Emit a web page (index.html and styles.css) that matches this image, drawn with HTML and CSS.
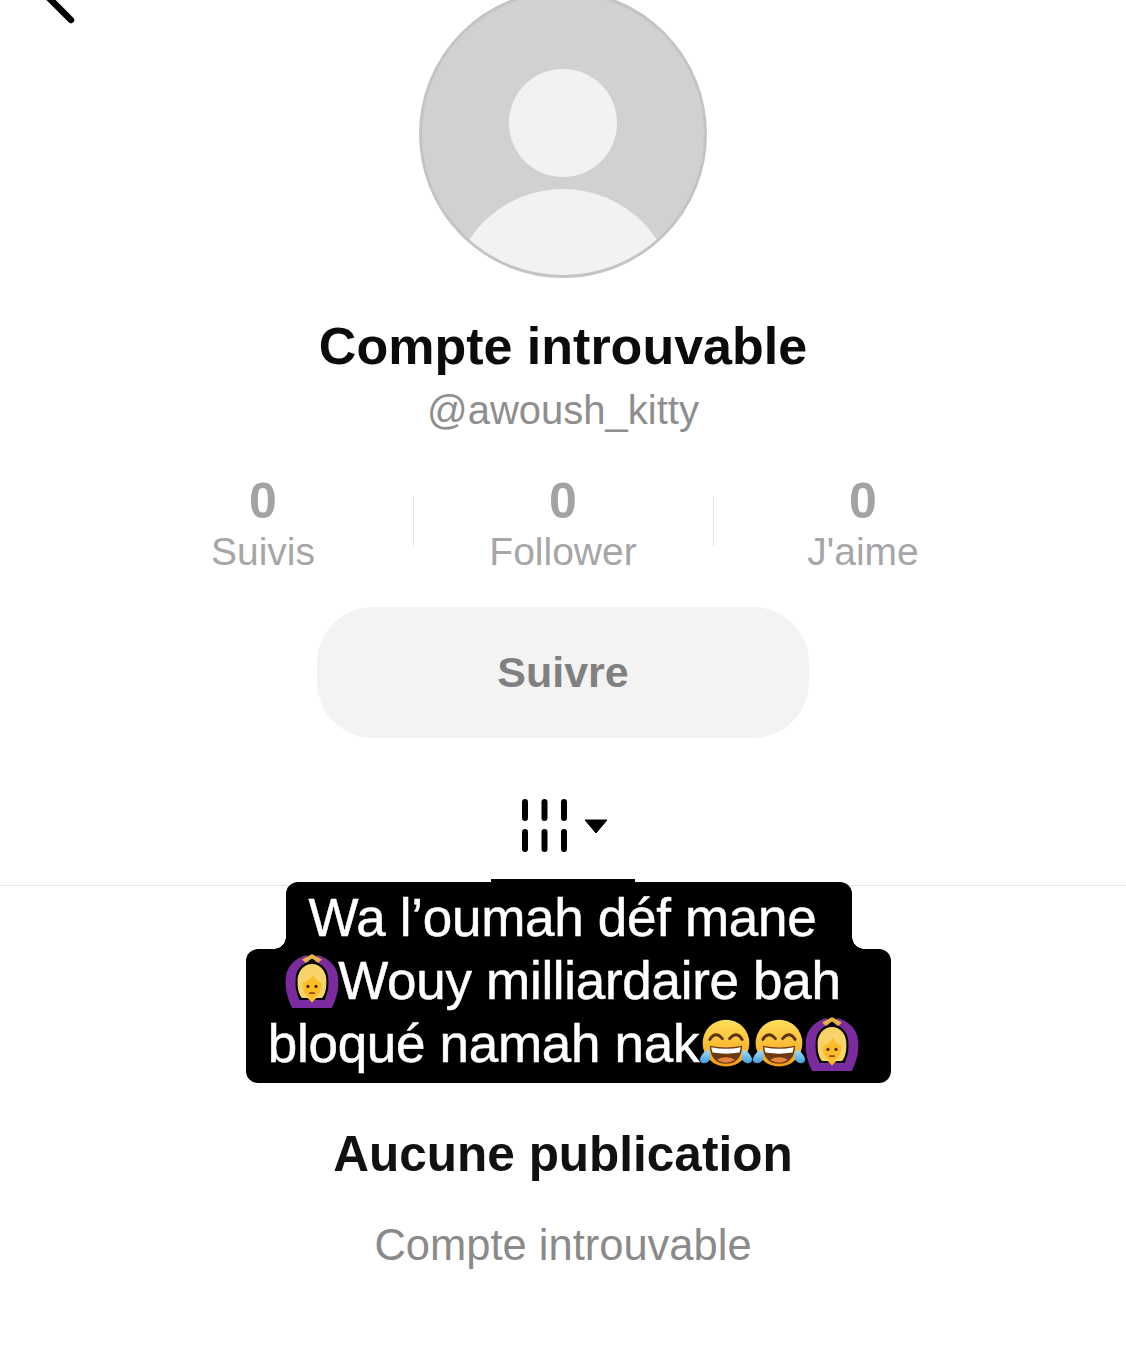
FILE: index.html
```html
<!DOCTYPE html>
<html lang="fr">
<head>
    <meta charset="UTF-8">
    <meta name="viewport" content="width=device-width, initial-scale=1.0">
    <title>Compte introuvable</title>
    <link rel="stylesheet" href="styles.css">
</head>
<body>
    <svg class="defs" width="0" height="0">
        <defs>
            <linearGradient id="joy-face" x1="0" y1="0" x2="0" y2="1">
                <stop offset="0" stop-color="#fee05a"/>
                <stop offset="1" stop-color="#f59e14"/>
            </linearGradient>
            <linearGradient id="joy-tear" x1="0" y1="0" x2="0" y2="1">
                <stop offset="0" stop-color="#a5e0f8"/>
                <stop offset="1" stop-color="#3f9fe0"/>
            </linearGradient>
            <symbol id="emoji-gesture" viewBox="0 0 60 60">
                <path d="M1 26C2 13 12 4 24 1L27 8C19 11 13 16 12 26 11 34 12 42 15 48L18 60H8C2 48 0 37 1 26Z" fill="#7a2c9e"/>
                <path d="M59 26C58 13 48 4 36 1L33 8C41 11 47 16 48 26 49 34 48 42 45 48L42 60H52C58 48 60 37 59 26Z" fill="#7a2c9e"/>
                <path d="M19 6L30 0 41 6 37 10 30 5 23 10Z" fill="#e9b043"/>
                <path d="M14 51H46V60H14Z" fill="#7a2c9e"/>
                <path d="M14 32C13 20 20 11 30 11 40 11 47 20 46 32 46 40 44 46 41 49H19C16 46 14 40 14 32Z" fill="#f7d36a"/>
                <path d="M20 32C24 31 29 27 31 23 34 28 37 31 40 32 41 41 36 49 30 49 24 49 19 41 20 32Z" fill="#fcbc28"/>
                <circle cx="25.500" cy="36" r="1.800" fill="#4a2c0a"/>
                <circle cx="34.500" cy="36" r="1.800" fill="#4a2c0a"/>
                <path d="M27.500 43.500H32.500" stroke="#8a4a12" stroke-width="1.800" stroke-linecap="round"/>
                <path d="M25 49H35L30 54Z" fill="#fcbc28"/>
            </symbol>
            <symbol id="emoji-joy" viewBox="0 0 60 60">
                <circle cx="30" cy="29" r="26" fill="url(#joy-face)"/>
                <path d="M12 25Q18 15 26 24" fill="none" stroke="#5a3410" stroke-width="3.200" stroke-linecap="round"/>
                <path d="M34 24Q42 15 48 25" fill="none" stroke="#5a3410" stroke-width="3.200" stroke-linecap="round"/>
                <path d="M12 32Q30 36 48 32 47 52 30 52 13 52 12 32Z" fill="#6b3a10"/>
                <path d="M13.500 33.500Q30 37 46.500 33.500L45 39.500Q30 42 15 39.500Z" fill="#fff"/>
                <path d="M20 47.500Q30 42 40 47.500 30 54 20 47.500Z" fill="#e9843f"/>
                <path d="M1 47C2 42 6 38 10 36 13 39 14 45 11 49 7 53 1 52 1 47Z" fill="url(#joy-tear)"/>
                <path d="M59 47C58 42 54 38 50 36 47 39 46 45 49 49 53 53 59 52 59 47Z" fill="url(#joy-tear)"/>
            </symbol>
        </defs>
    </svg>

    <div class="page">
        <svg class="back" viewBox="0 0 40 40" fill="none" stroke="#000" stroke-width="6.500" stroke-linecap="round">
            <path d="M4 2L30 28"/>
        </svg>

        <div class="avatar">
            <div class="avatar-head"></div>
            <div class="avatar-body"></div>
        </div>

        <h1 class="name">Compte introuvable</h1>
        <div class="handle">@awoush_kitty</div>

        <div class="stats">
            <div class="stat">
                <div class="stat-value">0</div>
                <div class="stat-label">Suivis</div>
            </div>
            <div class="stat">
                <div class="stat-value">0</div>
                <div class="stat-label">Follower</div>
            </div>
            <div class="stat">
                <div class="stat-value">0</div>
                <div class="stat-label">J'aime</div>
            </div>
        </div>

        <div class="follow">Suivre</div>

        <div class="tabs">
            <div class="tab">
                <svg class="tab-icon" viewBox="0 0 45 54" fill="none" stroke="#000" stroke-width="6" stroke-linecap="round">
                    <path d="M3 3V19M22.500 3V19M42 3V19M3 33V50M22.500 33V50M42 33V50"/>
                </svg>
                <svg class="tab-caret" viewBox="0 0 24 15"><path d="M1 1H23L12 14Z" fill="#000" stroke="#000" stroke-width="1" stroke-linejoin="round"/></svg>
            </div>
        </div>

        <div class="caption">
            <div class="caption-line first">Wa l’oumah déf mane&nbsp;</div>
            <div class="caption-line rest">
                <div><svg class="emoji"><use href="#emoji-gesture"/></svg>Wouy milliardaire bah</div>
                <div>bloqué namah nak<svg class="emoji"><use href="#emoji-joy"/></svg><svg class="emoji"><use href="#emoji-joy"/></svg><svg class="emoji"><use href="#emoji-gesture"/></svg></div>
            </div>
        </div>

        <div class="empty">
            <div class="empty-title">Aucune publication</div>
            <div class="empty-text">Compte introuvable</div>
        </div>
    </div>
</body>
</html>
```
FILE: styles.css
```css
* {
    margin: 0;
    padding: 0;
    box-sizing: border-box;
}
html, body {
    height: 100%;
    overflow: hidden;
    background: #fff;
}
body {
    font-family: 'Liberation Sans', Arial, sans-serif;
}
.defs {
    position: absolute;
}
.page {
    position: relative;
    height: 1360px;
    display: flex;
    flex-direction: column;
    align-items: center;
    overflow: hidden;
}
.back {
    position: absolute;
    left: 41px;
    top: -8px;
    width: 40px;
    height: 40px;
}
.avatar {
    position: relative;
    flex: none;
    width: 288px;
    height: 288px;
    margin-top: -10px;
    border-radius: 50%;
    background: #d0d1d3;
    border: 3px solid #c3c4c6;
    overflow: hidden;
}
.avatar-head {
    position: absolute;
    left: 87px;
    top: 76px;
    width: 108px;
    height: 108px;
    border-radius: 50%;
    background: #f2f2f3;
}
.avatar-body {
    position: absolute;
    left: 29px;
    top: 196px;
    width: 224px;
    height: 224px;
    border-radius: 50%;
    background: #f2f2f3;
}
.name {
    margin-top: 40px;
    font-size: 52px;
    line-height: 56px;
    font-weight: 700;
    color: #0b0b0b;
}
.handle {
    margin-top: 13px;
    font-size: 40px;
    line-height: 46px;
    color: #8e8e8e;
}
.stats {
    display: flex;
    margin-top: 40px;
}
.stat {
    position: relative;
    width: 300px;
    text-align: center;
}
.stat + .stat::before {
    content: '';
    position: absolute;
    left: 0;
    top: 23px;
    height: 50px;
    width: 1px;
    background: #e4e4e4;
}
.stat-value {
    font-size: 50px;
    line-height: 56px;
    font-weight: 700;
    color: #a3a3a3;
}
.stat-label {
    font-size: 39px;
    line-height: 46px;
    margin-bottom: 1px;
    color: #a6a6a6;
}
.follow {
    flex: none;
    width: 492px;
    height: 131px;
    margin-top: 31px;
    border-radius: 56px;
    background: #f3f3f3;
    color: #808080;
    font-size: 43px;
    font-weight: 700;
    line-height: 131px;
    text-align: center;
}
.tabs {
    flex: none;
    align-self: stretch;
    margin-top: 50px;
    height: 98px;
    border-bottom: 1px solid #e6e6e6;
    display: flex;
    justify-content: center;
}
.tab {
    width: 144px;
    height: 96px;
    border-bottom: 5px solid #000;
    display: flex;
    align-items: flex-start;
    padding-top: 11px;
    padding-left: 31px;
    gap: 17px;
}
.tab-icon {
    flex: none;
    width: 45px;
    height: 54px;
}
.tab-caret {
    flex: none;
    width: 24px;
    height: 15px;
    margin-top: 20px;
}
.caption {
    position: absolute;
    left: 11px;
    right: 0;
    top: 882px;
    display: flex;
    flex-direction: column;
    align-items: center;
    color: #fff;
    font-size: 53px;
    line-height: 63px;
    text-align: center;
    letter-spacing: -0.3px;
    -webkit-text-stroke: 0.5px #fff;
}
.caption-line {
    background: #000;
    white-space: nowrap;
    position: relative;
}
.caption-line.first {
    height: 67px;
    width: 566px;
    padding: 4px 0 0 23px;
    text-align: left;
    border-radius: 12px 12px 0 0;
}
.caption-line.first::before,
.caption-line.first::after {
    content: '';
    position: absolute;
    bottom: 0;
    width: 12px;
    height: 12px;
}
.caption-line.first::before {
    right: 100%;
    background: radial-gradient(circle at 0 0, transparent 11.5px, #000 12px);
}
.caption-line.first::after {
    left: 100%;
    background: radial-gradient(circle at 100% 0, transparent 11.5px, #000 12px);
}
.caption-line.rest {
    height: 134px;
    width: 645px;
    padding: 0 11px 0 0;
    border-radius: 12px;
}
.emoji {
    width: 54px;
    height: 54px;
    vertical-align: -9px;
    margin-right: -1px;
}
.empty {
    position: absolute;
    left: 0;
    right: 0;
    top: 1124px;
    text-align: center;
}
.empty-title {
    font-size: 49.5px;
    line-height: 60px;
    font-weight: 700;
    color: #111;
}
.empty-text {
    margin-top: 37px;
    font-size: 43.5px;
    line-height: 48px;
    color: #8a8a8a;
}
```
